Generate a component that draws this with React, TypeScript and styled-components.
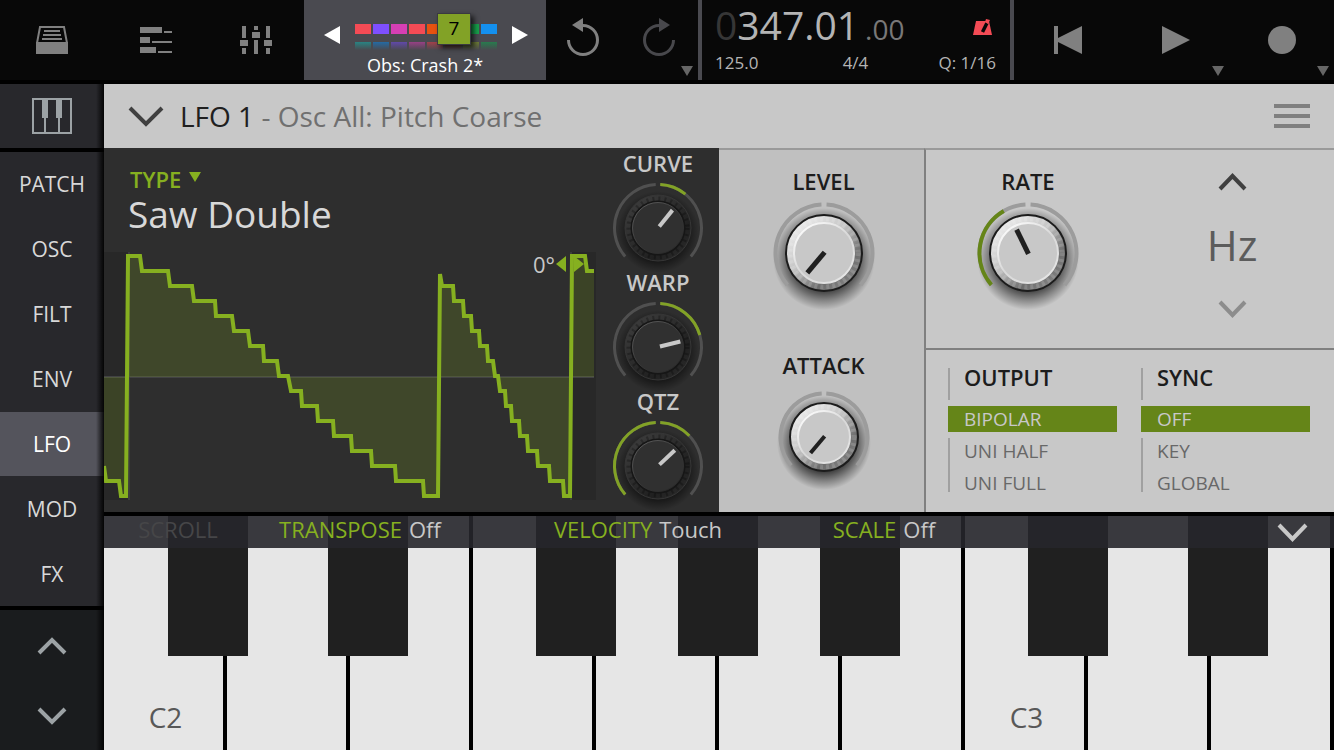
import React, { useState } from "react";
import styled, { createGlobalStyle, css } from "styled-components";

const green = "#86b020";
const darkGreen = "#658518";

const GlobalStyle = createGlobalStyle`
  *, *::before, *::after { box-sizing: border-box; }
  body {
    margin: 0;
    background: #000;
    font-family: "Open Sans", "Noto Sans", sans-serif;
    color: #d8d8d8;
  }
  button {
    border: 0;
    padding: 0;
    background: none;
    color: inherit;
    font: inherit;
    cursor: pointer;
  }
  svg { display: block; }
`;

const Page = styled.div`
  display: flex;
  flex-direction: column;
  gap: 4px;
  min-height: 100vh;
`;

/* ---------- top bar ---------- */

const TopBar = styled.header`
  display: grid;
  grid-template-columns: 304fr 242fr 152fr 316fr 320fr;
  height: 80px;
  background: #080808;
  color: #808080;
`;

const ButtonGroup = styled.div<{ $columns: string }>`
  display: grid;
  grid-template-columns: ${(p) => p.$columns};
`;

const BarButton = styled.button<{ $dim?: boolean }>`
  position: relative;
  display: flex;
  align-items: center;
  justify-content: center;
  color: ${(p) => (p.$dim ? "#48484c" : "#808080")};
`;

const Corner = styled.svg`
  position: absolute;
  right: 5px;
  bottom: 4px;
  color: #666;
`;

const ProjectCell = styled.div`
  display: flex;
  flex-direction: column;
  align-items: center;
  background: #4a4a50;
  color: #fff;
`;

const ProjectRow = styled.div`
  display: flex;
  align-items: center;
  justify-content: space-between;
  width: 100%;
  height: 52px;
  padding: 18px 18px 0 20px;
`;

const Slots = styled.div`
  position: relative;
  display: grid;
  grid-template-columns: repeat(8, 16px);
  gap: 8px 2px;
  padding-top: 4px;
`;

const Slot = styled.span<{ $color: string; $faded?: boolean }>`
  height: ${(p) => (p.$faded ? 8 : 10)}px;
  background: ${(p) => p.$color};
  ${(p) =>
    p.$faded &&
    css`
      background: linear-gradient(${p.$color}, transparent);
      opacity: 0.7;
    `}
`;

const SlotBadge = styled.span`
  position: absolute;
  left: 82px;
  top: -7px;
  width: 34px;
  height: 32px;
  border: 1px solid #3a3a40;
  background: #82a226;
  box-shadow: 3px 3px 5px rgba(0, 0, 0, 0.7);
  color: #000;
  font-size: 19px;
  line-height: 29px;
  text-align: center;
`;

const ProjectName = styled.div`
  font-size: 18px;
  line-height: 26px;
`;

const Display = styled.section`
  display: flex;
  flex-direction: column;
  padding: 0 14px 0 13px;
  border-left: 4px solid #4a4a50;
  border-right: 4px solid #4a4a50;
  color: #b4b4b4;
`;

const Position = styled.div`
  display: flex;
  align-items: baseline;
  height: 50px;
  font-size: 39px;
  line-height: 50px;
`;

const LeadZero = styled.span`
  color: #363636;
`;

const Ticks = styled.span`
  margin-left: 6px;
  color: #787878;
  font-size: 28px;
`;

const Metronome = styled.button`
  margin: 4px 3px 0 auto;
  align-self: center;
  color: #f44b55;
`;

const DisplayInfo = styled.div`
  display: grid;
  grid-template-columns: 1fr 1fr 1fr;
  font-size: 17px;
  line-height: 26px;
  & > :nth-child(2) { text-align: center; }
  & > :nth-child(3) { text-align: right; }
`;

/* ---------- sidebar ---------- */

const Body = styled.div`
  display: grid;
  grid-template-columns: 104px 1fr;
  flex: 1;
`;

const Sidebar = styled.nav`
  position: relative;
  display: flex;
  flex-direction: column;
  gap: 4px;
  &::after {
    content: "";
    position: absolute;
    inset: 0 0 0 auto;
    width: 8px;
    background: linear-gradient(to right, transparent, rgba(0, 0, 0, 0.9));
    pointer-events: none;
  }
`;

const KeysButton = styled.button`
  display: flex;
  align-items: center;
  justify-content: center;
  height: 64px;
  background: #28282c;
  color: #9ca2a5;
`;

const NavList = styled.div`
  display: flex;
  flex-direction: column;
  background: #28282c;
`;

const NavButton = styled.button<{ $active: boolean }>`
  height: 65px;
  border-bottom: 1px solid #28282c;
  background: ${(p) => (p.$active ? "#54545c" : "transparent")};
  color: ${(p) => (p.$active ? "#fff" : "#d8d8d8")};
  font-size: 21px;
  &:last-child {
    height: 64px;
    border-bottom: 0;
  }
`;

const Scroller = styled.div`
  display: flex;
  flex-direction: column;
  flex: 1;
  padding-top: 2px;
  background: #1a1c1e;
  color: #9ca2a5;
`;

const ScrollButton = styled.button`
  display: flex;
  flex: 1;
  align-items: center;
  justify-content: center;
`;

/* ---------- editor ---------- */

const Main = styled.main`
  display: flex;
  flex-direction: column;
  min-width: 0;
`;

const TitleBar = styled.div`
  display: flex;
  align-items: center;
  gap: 16px;
  height: 64px;
  padding: 0 24px;
  background: #c8c8c8;
  color: #404040;
`;

const Title = styled.h1`
  flex: 1;
  margin: 0;
  color: #707070;
  font-size: 28px;
  font-weight: 400;
  line-height: 64px;
`;

const TitleStrong = styled.span`
  color: #202020;
`;

const MenuButton = styled.button`
  color: #808080;
`;

const Editor = styled.div`
  display: grid;
  grid-template-columns: 615fr 205fr 410fr;
  height: 364px;
`;

const WavePanel = styled.section`
  display: grid;
  grid-template-columns: 492fr 123fr;
  background: #2e2e2e;
`;

const WaveColumn = styled.div`
  display: flex;
  flex-direction: column;
`;

const TypeButton = styled.button`
  display: flex;
  flex-direction: column;
  align-items: flex-start;
  height: 104px;
  padding: 18px 24px 0 24px;
  text-align: left;
`;

const TypeLabel = styled.span`
  display: flex;
  gap: 8px;
  padding: 0 0 2px 2px;
  color: ${green};
  font-size: 22px;
  font-weight: 600;
  line-height: 26px;
  & > svg { margin-top: 6px; }
`;

const TypeValue = styled.span`
  color: #d8d8d8;
  font-size: 37px;
  line-height: 40px;
`;

const Plot = styled.div`
  position: relative;
`;

const PlotSvg = styled.svg`
  width: 100%;
  height: 248px;
`;

const Phase = styled.div`
  position: absolute;
  top: 0;
  right: 12px;
  display: flex;
  align-items: center;
  gap: 1px;
  height: 24px;
  color: #c8c8c8;
  font-size: 22px;
`;

const KnobColumn = styled.div`
  display: flex;
  flex-direction: column;
  gap: 1px;
  padding-left: 1px;
`;

const LightColumn = styled.section`
  display: flex;
  flex-direction: column;
  gap: 40px;
  padding: 16px 0 0 4px;
  border-top: 2px solid #9a9a9a;
  background: #c0c0c0;
`;

const KnobLabel = styled.label<{ $light?: boolean }>`
  position: relative;
  display: flex;
  flex-direction: column;
  align-items: center;
  color: ${(p) => (p.$light ? "#1c1c1c" : "#c8c8c8")};
  font-size: 22px;
  font-weight: 600;
  line-height: 30px;
  & > svg {
    margin-top: 2px;
    overflow: visible;
  }
`;

const KnobInput = styled.input`
  position: absolute;
  inset: 32px 0 0 0;
  width: 100%;
  height: 80px;
  margin: 0;
  opacity: 0;
  cursor: pointer;
`;

const RightColumn = styled.section`
  display: grid;
  grid-template-rows: 200px 1fr;
  border-top: 2px solid #9a9a9a;
  border-left: 2px solid #808080;
  background: #c8c8c8;
`;

const RatePanel = styled.div`
  display: grid;
  grid-template-columns: 1fr 1fr;
  padding-top: 16px;
  border-bottom: 2px solid #808080;
`;

const UnitPicker = styled.div`
  display: flex;
  flex-direction: column;
  align-items: center;
  color: #505050;
`;

const UnitButton = styled.button<{ $dim?: boolean }>`
  height: 32px;
  color: ${(p) => (p.$dim ? "#8c8c8c" : "#404040")};
`;

const Unit = styled.span`
  color: #5c5c5c;
  font-size: 42px;
  line-height: 94px;
`;

const OptionsPanel = styled.div`
  display: grid;
  grid-template-columns: 1fr 1fr;
  gap: 24px;
  padding: 18px 24px 0 22px;
`;

const Group = styled.fieldset`
  min-width: 0;
  margin: 0;
  padding: 0;
  border: 0;
`;

const Legend = styled.legend`
  width: 100%;
  margin-bottom: 6px;
  padding: 0 0 14px 14px;
  border-left: 2px solid #a0a0a0;
  color: #1c1c1c;
  font-size: 22px;
  font-weight: 600;
  line-height: 18px;
`;

const Option = styled.label<{ $active: boolean }>`
  position: relative;
  display: block;
  margin-bottom: 6px;
  padding-left: 16px;
  background: ${(p) => (p.$active ? darkGreen : "transparent")};
  color: ${(p) => (p.$active ? "#c8c8c8" : "#686868")};
  font-size: 19px;
  line-height: 26px;
  cursor: pointer;
  &::before {
    content: "";
    position: absolute;
    inset: 0 auto -6px 0;
    width: 2px;
    background: ${(p) => (p.$active ? "transparent" : "#a0a0a0")};
  }
  &:last-child::before { bottom: 4px; }
`;

const HiddenRadio = styled.input`
  position: absolute;
  inset: 0;
  width: 100%;
  height: 100%;
  margin: 0;
  opacity: 0;
  cursor: pointer;
`;

/* ---------- keyboard ---------- */

const Keyboard = styled.section`
  position: relative;
  display: flex;
  flex: 1;
  min-height: 234px;
  margin-top: 4px;
`;

const WhiteKey = styled.button`
  display: flex;
  flex: 1;
  align-items: flex-end;
  justify-content: center;
  padding: 0 0 14px 4px;
  border-right: 4px solid #000;
  background: #e6e6e6;
  color: #585858;
  font-size: 28px;
`;

const BlackKeys = styled.div`
  position: absolute;
  inset: 0 0 auto 0;
  display: grid;
  grid-template-columns: 64fr 80fr 80fr 80fr 128fr 80fr 62fr 80fr 62fr 80fr 128fr 80fr 80fr 80fr 66fr;
  height: 140px;
  pointer-events: none;
`;

const BlackKey = styled.button`
  background: #202020;
  pointer-events: auto;
`;

const Strip = styled.div`
  position: absolute;
  inset: 0 0 auto 0;
  display: grid;
  grid-template-columns: 148fr 216fr 340fr 152fr 290fr 84fr;
  height: 32px;
  background: rgba(38, 38, 43, 0.9);
`;

const StripButton = styled.button<{ $dim?: boolean }>`
  display: flex;
  justify-content: center;
  gap: 7px;
  color: ${(p) => (p.$dim ? "#464648" : green)};
  font-size: 22px;
  line-height: 26px;
  white-space: nowrap;
`;

const StripValue = styled.span`
  color: #c8c8c8;
`;

const StripClose = styled.button`
  grid-column: 6;
  display: flex;
  align-items: center;
  justify-content: center;
  color: #c8c8c8;
`;

/* ---------- drawings ---------- */

function Chevron({ width, rise, stroke = 4, up }: { width: number; rise: number; stroke?: number; up?: boolean }) {
  const h = rise + 6;
  const y = up ? [h - 3, 3] : [3, h - 3];
  return (
    <svg width={width} height={h} viewBox={`0 0 ${width} ${h}`} fill="none" stroke="currentColor" strokeWidth={stroke}>
      <path d={`M2 ${y[0]}L${width / 2} ${y[1]}L${width - 2} ${y[0]}`} />
    </svg>
  );
}

function CornerMark() {
  return (
    <Corner width="12" height="10" viewBox="0 0 12 10" fill="currentColor">
      <path d="M0 0h12L6 10z" />
    </Corner>
  );
}

function polar(radius: number, degrees: number) {
  const a = (degrees * Math.PI) / 180;
  return `${(radius * Math.sin(a)).toFixed(2)} ${(-radius * Math.cos(a)).toFixed(2)}`;
}

function arc(radius: number, from: number, to: number) {
  return `M${polar(radius, from)}A${radius} ${radius} 0 0 1 ${polar(radius, to)}`;
}

interface KnobProps {
  label: string;
  angle: number;
  light?: boolean;
  large?: boolean;
  lit?: [number, number][];
}

function Knob({ label, angle, light, large, lit = [] }: KnobProps) {
  const outer = large ? 48.5 : 43.5;
  const body = light ? (large ? 38 : 34) : 33;
  const cap = light ? (large ? 30 : 26) : 25.5;
  const id = label.toLowerCase();
  const box = light ? "-56 -55 112 112" : "-46 -48 92 86";
  return (
    <KnobLabel $light={light}>
      {label}
      <svg width={light ? 112 : 92} height={light ? 112 : 86} viewBox={box} fill="none">
        <defs>
          <linearGradient id={`${id}-rim`} x1="0.1" y1="0.1" x2="0.8" y2="0.9">
            <stop offset="0" stopColor={light ? "#f0f0f0" : "#3c3c3c"} />
            <stop offset="0.45" stopColor={light ? "#c4c4c4" : "#2c2c2c"} />
            <stop offset="0.8" stopColor={light ? "#6c6c6c" : "#202020"} />
            <stop offset="1" stopColor={light ? "#808080" : "#282828"} />
          </linearGradient>
          <linearGradient id={`${id}-edge`} x1="0.1" y1="0" x2="0.9" y2="1">
            <stop offset="0" stopColor={light ? "#fff" : "#606060"} />
            <stop offset="0.5" stopColor={light ? "#d8d8d8" : "#3a3a3a"} />
            <stop offset="1" stopColor={light ? "#e8e8e8" : "#262626"} />
          </linearGradient>
          <radialGradient id={`${id}-shade`}>
            <stop offset="0.6" stopColor="#000" stopOpacity="0.7" />
            <stop offset="0.82" stopColor="#000" stopOpacity="0.3" />
            <stop offset="1" stopColor="#000" stopOpacity="0" />
          </radialGradient>
        </defs>
        <circle cy={light ? 6 : 4} r={body + (light ? 13 : 8)} fill={`url(#${id}-shade)`} />
        <g stroke={light ? "#9c9c9c" : "#505050"} strokeWidth={light ? 4 : 3}>
          <path d={arc(outer, -131, -3)} />
          <path d={arc(outer, 3, 131)} />
        </g>
        <g stroke={light ? darkGreen : "#82a226"} strokeWidth={light ? 4 : 3}>
          {lit.map(([from, to]) => (
            <path key={from} d={arc(outer, from, to)} />
          ))}
        </g>
        <circle r={body} fill={`url(#${id}-rim)`} stroke={light ? "#1c1c1c" : "#363636"} strokeWidth={light ? 2 : 1} />
        <circle
          r={(body + cap) / 2}
          stroke={light ? "#fff" : "#000"}
          strokeOpacity={light ? 0.15 : 0.25}
          strokeWidth={body - cap - 3}
          strokeDasharray={light ? "3 3" : "2 4"}
        />
        {!light && <circle r={cap + 1} stroke="#161616" strokeWidth="2" />}
        <circle r={cap} fill={light ? "#c8c8c8" : "#303030"} stroke={`url(#${id}-edge)`} strokeWidth={light ? 2 : 1} />
        <path
          d={`M0 ${light ? 1 : -2}V${light ? (large ? -26 : -21) : -23}`}
          transform={`rotate(${angle})`}
          stroke={light ? "#202020" : "#c8c8c8"}
          strokeWidth={light ? (large ? 5 : 4) : 4}
        />
      </svg>
      <KnobInput type="range" min={-140} max={140} defaultValue={angle} aria-label={label} />
    </KnobLabel>
  );
}

// Waveform vertices: x position and the top-to-bottom quantised level (0..16).
const wave: [number, number][] = [
  [0, 14], [2, 15], [15, 15], [17, 16], [22, 16], [24, 0], [36, 0], [38, 1], [64, 1], [66, 2], [88, 2],
  [90, 3], [111, 3], [112, 4], [128, 4], [130, 5], [144, 5], [146, 6], [159, 6], [160, 7], [173, 7],
  [175, 8], [184, 8], [187, 9], [197, 9], [198, 10], [213, 10], [214, 11], [229, 11], [230, 12], [247, 12],
  [248, 13], [267, 13], [268, 14], [291, 14], [292, 15], [319, 15], [320, 16], [334, 16], [336, 1.2],
  [338, 2], [349, 2], [350, 3], [359, 3], [360, 4], [367, 4], [368, 5], [375, 5], [376, 6], [383, 6],
  [384, 7], [389, 7], [391, 8], [394, 8], [396, 9], [401, 9], [402, 10], [407, 10], [408, 11], [415, 11],
  [416, 12], [423, 12], [424, 13], [433, 13], [434, 14], [445, 14], [446, 15], [459, 15], [460, 16],
  [466, 16], [468, 0], [481, 0], [483, 1], [490, 1],
];

function Waveform() {
  const line = wave.map(([x, level]) => `${x} ${4 + level * 15}`).join("L");
  return (
    <PlotSvg viewBox="0 0 492 248" preserveAspectRatio="none" fill="none" role="img" aria-label="LFO waveform">
      <path d="M0 0h24v248H0zM468 0h24v248h-24z" fill="#282828" />
      <path d="M24 0h2v248h-2zM466 0h2v248h-2z" fill="#3c3c3c" />
      <path d="M0 124h490v2H0z" fill="#424244" />
      <path d={`M0 125L${line}L490 125z`} fill={green} fillOpacity="0.2" />
      <path d={`M${line}`} stroke={green} strokeWidth="4" vectorEffect="non-scaling-stroke" />
    </PlotSvg>
  );
}

/* ---------- app ---------- */

const slotColors = ["#f44b55", "#7e4fff", "#d63fb4", "#f44b55", "#e85210", "#82a226", "#18a04c", "#1490ee"];
const fadedColors = ["#1a9c98", "#1478c8", "#6a48d0", "#b83c9c", "#c83c48", "#803020", "#7c9428", "#18904c"];
const tabs = ["PATCH", "OSC", "FILT", "ENV", "LFO", "MOD", "FX"];
const blackColumns = [2, 4, 6, 8, 10, 12, 14];

function RadioGroup({ title, options }: { title: string; options: string[] }) {
  const [value, setValue] = useState(options[0]);
  return (
    <Group>
      <Legend>{title}</Legend>
      {options.map((option) => (
        <Option key={option} $active={option === value}>
          <HiddenRadio type="radio" name={title} checked={option === value} onChange={() => setValue(option)} />
          {option}
        </Option>
      ))}
    </Group>
  );
}

export default function App() {
  const [tab, setTab] = useState("LFO");
  return (
    <>
      <GlobalStyle />
      <Page>
        <TopBar>
          <ButtonGroup $columns="104fr 104fr 96fr">
            <BarButton aria-label="Presets">
              <svg width="32" height="28" viewBox="0 0 32 28" fill="currentColor">
                <path d="M0 16h32v12H0z" />
                <path d="M4 1h24l3 16H1z" fill="none" stroke="currentColor" strokeWidth="2" />
                <path d="M8 4h16v2H8zM7 8h18v2H7zM6 12h20v2H6z" />
              </svg>
            </BarButton>
            <BarButton aria-label="Timeline">
              <svg width="32" height="26" viewBox="0 0 32 26" fill="currentColor">
                <path d="M0 0h22v6H0zM24 4h8v2h-8zM0 10h10v6H0zM12 14h20v2H12zM0 20h16v6H0zM18 24h14v2H18z" />
              </svg>
            </BarButton>
            <BarButton aria-label="Mixer">
              <svg width="32" height="28" viewBox="0 0 32 28" fill="currentColor">
                <path d="M2 0h4v12H2zM0 14h8v6H0zM2 22h4v6H2zM14 0h4v4h-4zM12 6h8v6h-8zM14 14h4v14h-4zM26 0h4v12h-4zM24 14h8v6h-8zM26 22h4v6h-4z" />
              </svg>
            </BarButton>
          </ButtonGroup>

          <ProjectCell>
            <ProjectRow>
              <button aria-label="Previous track">
                <svg width="16" height="18" viewBox="0 0 16 18" fill="currentColor"><path d="M16 0v18L0 9z" /></svg>
              </button>
              <Slots>
                {slotColors.map((c, i) => <Slot key={i} $color={c} />)}
                {fadedColors.map((c, i) => <Slot key={i} $color={c} $faded />)}
                <SlotBadge>7</SlotBadge>
              </Slots>
              <button aria-label="Next track">
                <svg width="16" height="18" viewBox="0 0 16 18" fill="currentColor"><path d="M0 0v18l16-9z" /></svg>
              </button>
            </ProjectRow>
            <ProjectName>Obs: Crash 2*</ProjectName>
          </ProjectCell>

          <ButtonGroup $columns="73fr 79fr">
            <BarButton aria-label="Undo">
              <svg width="32" height="44" viewBox="0 0 32 44">
                <path d="M1.500 22A14.500 14.500 0 1 0 16 7.500" fill="none" stroke="currentColor" strokeWidth="3" />
                <path d="M16 0v14L5 7z" fill="currentColor" />
              </svg>
            </BarButton>
            <BarButton $dim aria-label="Redo">
              <svg width="32" height="44" viewBox="0 0 32 44">
                <path d="M30.500 22A14.500 14.500 0 1 1 16 7.500" fill="none" stroke="currentColor" strokeWidth="3" />
                <path d="M16 0v14l11-7z" fill="currentColor" />
              </svg>
              <CornerMark />
            </BarButton>
          </ButtonGroup>

          <Display>
            <Position>
              <LeadZero>0</LeadZero>347.01<Ticks>.00</Ticks>
              <Metronome aria-label="Metronome">
                <svg width="20" height="16" viewBox="0 0 20 16">
                  <path d="M3 2h13l3 14H0z" fill="currentColor" />
                  <path d="M9.500 13l4.500-9" stroke="#080808" strokeWidth="3.500" />
                  <path d="M13 0l4 1-2 4-3-2z" fill="currentColor" />
                </svg>
              </Metronome>
            </Position>
            <DisplayInfo>
              <span>125.0</span>
              <span>4/4</span>
              <span>Q: 1/16</span>
            </DisplayInfo>
          </Display>

          <ButtonGroup $columns="108fr 107fr 105fr">
            <BarButton aria-label="Rewind">
              <svg width="28" height="28" viewBox="0 0 28 28" fill="currentColor"><path d="M0 0h4v12L28 0v28L4 16v12H0z" /></svg>
            </BarButton>
            <BarButton aria-label="Play">
              <svg width="28" height="28" viewBox="0 0 28 28" fill="currentColor"><path d="M0 0l28 14L0 28z" /></svg>
              <CornerMark />
            </BarButton>
            <BarButton aria-label="Record">
              <svg width="28" height="28" viewBox="0 0 28 28" fill="currentColor"><circle cx="14" cy="14" r="14" /></svg>
              <CornerMark />
            </BarButton>
          </ButtonGroup>
        </TopBar>

        <Body>
          <Sidebar>
            <KeysButton aria-label="Keyboard">
              <svg width="40" height="36" viewBox="0 0 40 36" fill="currentColor">
                <path d="M1 1h38v34H1z" fill="none" stroke="currentColor" strokeWidth="2" />
                <path d="M10 0h6v20h-6zM24 0h6v20h-6zM12 20h2v15h-2zM26 20h2v15h-2z" />
              </svg>
            </KeysButton>
            <NavList>
              {tabs.map((name) => (
                <NavButton key={name} $active={name === tab} onClick={() => setTab(name)}>{name}</NavButton>
              ))}
            </NavList>
            <Scroller>
              <ScrollButton aria-label="Scroll up"><Chevron width={30} rise={13} up /></ScrollButton>
              <ScrollButton aria-label="Scroll down"><Chevron width={30} rise={13} /></ScrollButton>
            </Scroller>
          </Sidebar>

          <Main>
            <TitleBar>
              <button aria-label="Collapse"><Chevron width={36} rise={16} /></button>
              <Title><TitleStrong>LFO 1</TitleStrong> - Osc All: Pitch Coarse</Title>
              <MenuButton aria-label="Menu">
                <svg width="36" height="24" viewBox="0 0 36 24" fill="currentColor"><path d="M0 0h36v4H0zM0 10h36v4H0zM0 20h36v4H0z" /></svg>
              </MenuButton>
            </TitleBar>

            <Editor>
              <WavePanel>
                <WaveColumn>
                  <TypeButton>
                    <TypeLabel>
                      TYPE
                      <svg width="12" height="10" viewBox="0 0 12 10" fill="currentColor"><path d="M0 0h12L6 10z" /></svg>
                    </TypeLabel>
                    <TypeValue>Saw Double</TypeValue>
                  </TypeButton>
                  <Plot>
                    <Waveform />
                    <Phase>
                      0°
                      <svg width="28" height="16" viewBox="0 0 28 16" fill={green}><path d="M10 0v16L0 8zM18 0v16l10-8z" /></svg>
                    </Phase>
                  </Plot>
                </WaveColumn>
                <KnobColumn>
                  <Knob label="CURVE" angle={39} lit={[[3, 39]]} />
                  <Knob label="WARP" angle={76} lit={[[3, 74]]} />
                  <Knob label="QTZ" angle={47} lit={[[-131, -3], [3, 46]]} />
                </KnobColumn>
              </WavePanel>

              <LightColumn>
                <Knob label="LEVEL" angle={-140} light large />
                <Knob label="ATTACK" angle={-140} light />
              </LightColumn>

              <RightColumn>
                <RatePanel>
                  <Knob label="RATE" angle={-26} light large lit={[[-131, -30]]} />
                  <UnitPicker>
                    <UnitButton aria-label="Previous unit"><Chevron width={29} rise={13} up /></UnitButton>
                    <Unit>Hz</Unit>
                    <UnitButton $dim aria-label="Next unit"><Chevron width={29} rise={13} /></UnitButton>
                  </UnitPicker>
                </RatePanel>
                <OptionsPanel>
                  <RadioGroup title="OUTPUT" options={["BIPOLAR", "UNI HALF", "UNI FULL"]} />
                  <RadioGroup title="SYNC" options={["OFF", "KEY", "GLOBAL"]} />
                </OptionsPanel>
              </RightColumn>
            </Editor>

            <Keyboard>
              {Array.from({ length: 10 }, (_, i) => (
                <WhiteKey key={i} aria-label={`White key ${i + 1}`}>{i % 7 === 0 ? `C${2 + i / 7}` : ""}</WhiteKey>
              ))}
              <BlackKeys>
                {blackColumns.map((column) => (
                  <BlackKey key={column} style={{ gridColumn: column }} aria-label={`Black key ${column / 2}`} />
                ))}
              </BlackKeys>
              <Strip>
                <StripButton $dim>SCROLL</StripButton>
                <StripButton>TRANSPOSE <StripValue>Off</StripValue></StripButton>
                <StripButton>VELOCITY <StripValue>Touch</StripValue></StripButton>
                <StripButton>SCALE <StripValue>Off</StripValue></StripButton>
                <StripClose aria-label="Hide strip"><Chevron width={31} rise={14} /></StripClose>
              </Strip>
            </Keyboard>
          </Main>
        </Body>
      </Page>
    </>
  );
}
